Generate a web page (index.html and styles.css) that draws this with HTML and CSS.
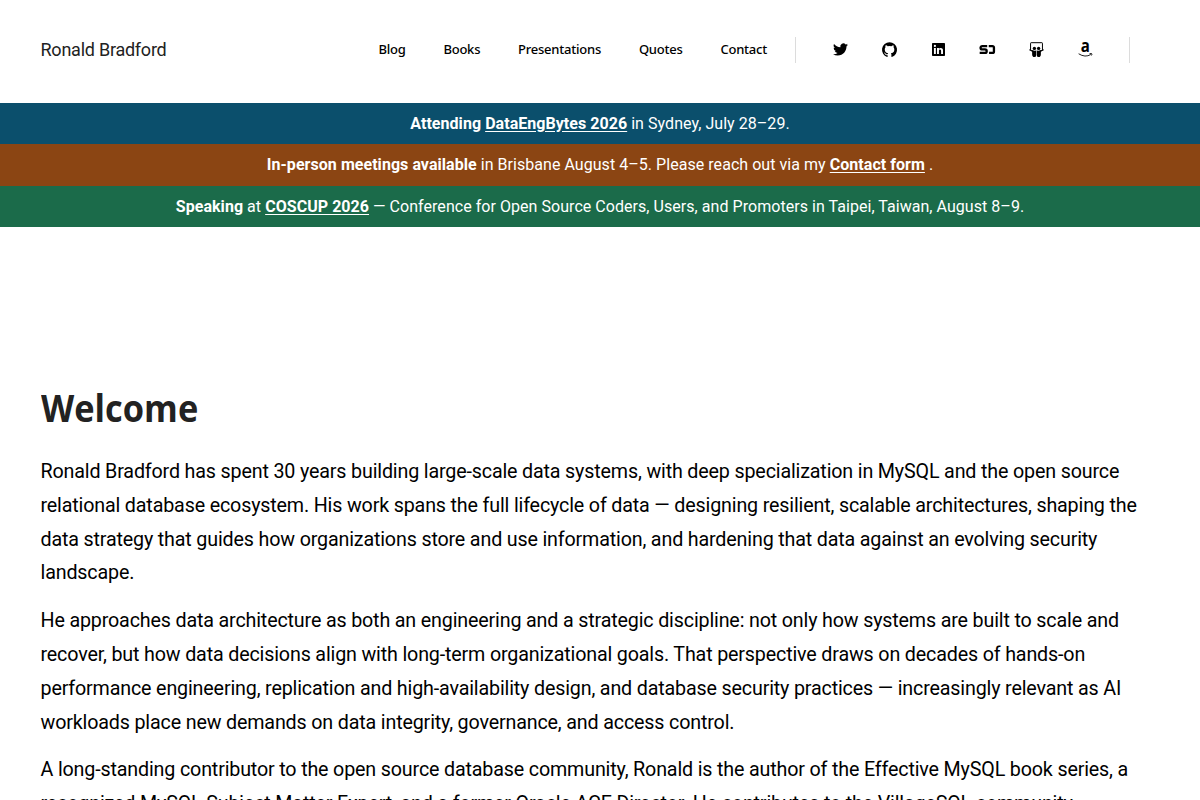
FILE: index.html
```html
<!DOCTYPE html>
<html lang="en">
<head>
<meta charset="utf-8">
<title>Ronald Bradford</title>
<link rel="stylesheet" href="styles.css">
</head>
<body>
<header class="header">
  <a class="brand" href="#">Ronald Bradford</a>
  <nav class="menu">
    <a href="#">Blog</a>
    <a href="#">Books</a>
    <a href="#">Presentations</a>
    <a href="#">Quotes</a>
    <a href="#">Contact</a>
  </nav>
  <div class="social">
    <a href="#" aria-label="Twitter"><svg viewBox="0 0 24 24"><path d="M23.953 4.57a10 10 0 01-2.825.775 4.958 4.958 0 002.163-2.723c-.951.555-2.005.959-3.127 1.184a4.92 4.92 0 00-8.384 4.482C7.69 8.095 4.067 6.13 1.64 3.162a4.822 4.822 0 00-.666 2.475c0 1.71.87 3.213 2.188 4.096a4.904 4.904 0 01-2.228-.616v.06a4.923 4.923 0 003.946 4.827 4.996 4.996 0 01-2.212.085 4.936 4.936 0 004.604 3.417 9.867 9.867 0 01-6.102 2.105c-.39 0-.779-.023-1.17-.067a13.995 13.995 0 007.557 2.209c9.053 0 13.998-7.496 13.998-13.985 0-.21 0-.42-.015-.63A9.935 9.935 0 0024 4.59z"/></svg></a>
    <a href="#" aria-label="GitHub"><svg viewBox="0 0 16 16"><path d="M8 .3a8 8 0 0 0-2.530 15.590c.4.070.550-.170.550-.380v-1.490c-2.010.370-2.530-.490-2.690-.940-.090-.230-.480-.940-.820-1.130-.280-.150-.680-.520-.010-.530.630-.010 1.080.580 1.230.820.720 1.210 1.870.870 2.330.660.070-.520.280-.870.510-1.070-1.780-.2-3.640-.890-3.640-3.950 0-.870.310-1.590.820-2.150-.080-.2-.360-1.020.080-2.120 0 0 .670-.210 2.200.820a7.600 7.600 0 0 1 4 0c1.530-1.040 2.200-.820 2.200-.820.440 1.100.160 1.920.080 2.120.510.560.820 1.270.820 2.150 0 3.070-1.870 3.750-3.650 3.950.290.250.540.730.540 1.480v2.200c0 .210.150.460.550.380A8 8 0 0 0 8 .3Z"/></svg></a>
    <a href="#" aria-label="LinkedIn"><svg class="linkedin" viewBox="0 0 24 24"><path fill-rule="evenodd" d="M1.500 0h21A1.500 1.500 0 0 1 24 1.500v21a1.500 1.500 0 0 1-1.500 1.500h-21A1.500 1.500 0 0 1 0 22.500v-21A1.500 1.500 0 0 1 1.500 0zM3.600 9.300v11h3.500v-11zM5.350 3.300a2.050 2.050 0 1 0 0 4.100 2.050 2.050 0 0 0 0-4.100zM9.300 9.300v11h3.500v-5.500c0-1.600.4-2.900 2.100-2.900s1.900 1.400 1.900 3v5.400h3.500v-6.200c0-3.200-.9-5.100-4.300-5.100-1.600 0-2.700.8-3.200 1.700V9.300z"/></svg></a>
    <a href="#" aria-label="Speaker Deck"><svg viewBox="0 0 24 24"><path d="M11.500 6.500H3.600a2.700 2.700 0 0 0 0 5.400H8a2.700 2.700 0 0 1 0 5.400H-.5M14 6.500H20a2.300 2.300 0 0 1 2.300 2.300v6.200a2.300 2.300 0 0 1-2.300 2.300h-5.500" fill="none" stroke="#000" stroke-width="3.700" stroke-linejoin="round"/></svg></a>
    <a href="#" aria-label="SlideShare"><svg viewBox="0 0 24 24"><path d="M2.500 13V2Q2.500 1.100 3.400 1.100H20.600Q21.500 1.100 21.500 2V13M.4 12.500Q3 14.200 7 14.200M23.600 12.500Q21 14.200 17 14.200" fill="none" stroke="#000" stroke-width="1.600"/><circle cx="8.600" cy="10.200" r="2.700"/><circle cx="15.400" cy="10.200" r="2.700"/><path d="M2.500 12.500Q8 14.500 11.500 13.700V21Q11.500 24 8.500 24 5 24 5 19.500V16Q3.500 15 2.500 12.500zM21.500 12.500Q16 14.500 12.500 13.700V21Q12.500 24 15.500 24 19 24 19 19.500V16Q20.500 15 21.500 12.500z"/></svg></a>
    <a href="#" aria-label="Amazon"><svg viewBox="0 0 24 24"><text class="amazon-letter" transform="translate(11.500 16.400) scale(.86 1)">a</text><path d="M1 18.800Q11.500 25.500 20.500 20M18.500 18.600Q23 18 22.500 19.200L21.500 21.600" fill="none" stroke="#000" stroke-width="1.400"/></svg></a>
  </div>
</header>
<div class="notice blue"><p><strong>Attending <a href="#">DataEngBytes 2026</a></strong> in Sydney, July 28–29.</p></div>
<div class="notice brown"><p><strong>In-person meetings available</strong> in Brisbane August 4–5. Please reach out via my <strong><a href="#">Contact form</a></strong> .</p></div>
<div class="notice green"><p><strong>Speaking</strong> at <strong><a href="#">COSCUP 2026</a></strong> — Conference for Open Source Coders, Users, and Promoters in Taipei, Taiwan, August 8–9.</p></div>
<main class="content">
  <h1>Welcome</h1>
  <p>Ronald Bradford has spent 30 years building large-scale data systems, with deep specialization in MySQL and the open source relational database ecosystem. His work spans the full lifecycle of data — designing resilient, scalable architectures, shaping the data strategy that guides how organizations store and use information, and hardening that data against an evolving security landscape.</p>
  <p>He approaches data architecture as both an engineering and a strategic discipline: not only how systems are built to scale and recover, but how data decisions align with long-term organizational goals. That perspective draws on decades of hands-on performance engineering, replication and high-availability design, and database security practices — increasingly relevant as AI workloads place new demands on data integrity, governance, and access control.</p>
  <p>A long-standing contributor to the open source database community, Ronald is the author of the Effective MySQL book series, a recognized MySQL Subject Matter Expert, and a former Oracle ACE Director. He contributes to the VillageSQL community.</p>
</main>
</body>
</html>
```
FILE: styles.css
```css
* { box-sizing: border-box; }
html { height: 100%; overflow: hidden; }
body { margin: 0; height: 100%; overflow: hidden; background: #fff; color: #000; font-family: Roboto, sans-serif; }
a { color: inherit; text-decoration: none; }
.header { display: flex; align-items: center; height: 102.5px; padding: 0 70px 3px 40.5px; }
.brand { flex: 1; color: #222; font-size: 18px; line-height: 26px; letter-spacing: -0.24px; }
.menu { display: flex; gap: 37.8px; padding: 0 28px 2px 0; font: 500 13px/26px "Noto Sans", sans-serif; letter-spacing: -0.22px; }
.social { display: flex; align-items: center; gap: 33px; width: 335px; height: 26px; padding-left: 36px; border-left: 1px solid #dcdcdc; border-right: 1px solid #dcdcdc; }
.social a { display: flex; width: 16px; justify-content: center; }
.social svg { display: block; width: 15px; height: 15px; fill: #000; overflow: visible; }
.social .linkedin { width: 13px; height: 13px; }
.amazon-letter { font: 700 28px "Open Sans", sans-serif; text-anchor: middle; }
.notice { height: 41.6px; padding: 8px 16px; color: #fff; font-size: 16px; line-height: 25.6px; letter-spacing: 0.045px; text-align: center; }
.notice p { margin: 0; }
.notice a { text-decoration: underline; text-underline-offset: 2px; }
.blue { background: #0b4f6c; }
.brown { background: #8b4513; }
.green { background: #1b6b4a; }
.content { padding: 157px 40px 0 40.5px; }
.content h1 { margin: 0 0 22.8px; color: #222; font: 700 37px/48px "Open Sans", sans-serif; transform: scaleX(0.93); transform-origin: left; }
.content p { margin: 0 0 14px; font-size: 19.7px; line-height: 33.8px; letter-spacing: -0.16px; }
```
